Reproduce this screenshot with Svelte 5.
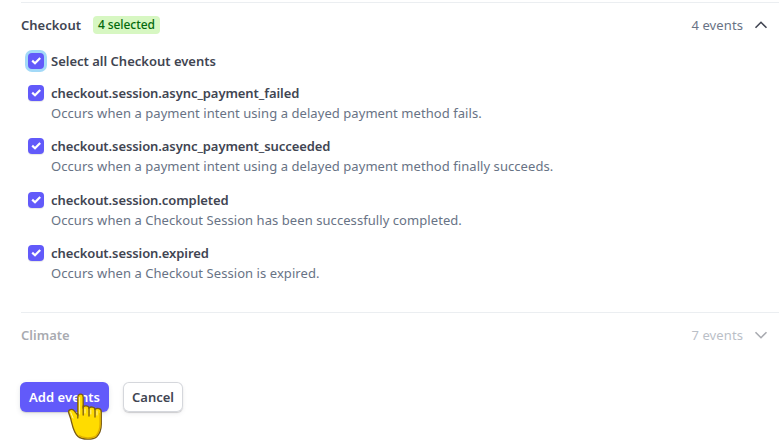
<script>
    let groups = [
        {
            name: 'Checkout',
            count: 4,
            open: true,
            events: [
                { name: 'checkout.session.async_payment_failed', text: 'Occurs when a payment intent using a delayed payment method fails.', checked: true },
                { name: 'checkout.session.async_payment_succeeded', text: 'Occurs when a payment intent using a delayed payment method finally succeeds.', checked: true },
                { name: 'checkout.session.completed', text: 'Occurs when a Checkout Session has been successfully completed.', checked: true },
                { name: 'checkout.session.expired', text: 'Occurs when a Checkout Session is expired.', checked: true }
            ]
        },
        { name: 'Climate', count: 7, open: false, events: [] }
    ]

    /**
	 * @param {any} group
	 */
    function selected(group) {
        return group.events.filter((/** @type {any} */ e) => e.checked).length
    }

    /**
	 * @param {any} group
	 */
    function toggleAll(group) {
        const value = selected(group) !== group.events.length
        group.events.forEach((/** @type {any} */ e) => e.checked = value)
        groups = groups
    }
</script>

<div class="page">
    <div class="list">
        {#each groups as group}
            <section class:faded={!group.open}>
                <button class="group_head" on:click={() => group.open = !group.open}>
                    <span class="group_name">{group.name}</span>
                    {#if selected(group) > 0}
                        <span class="badge">{selected(group)} selected</span>
                    {/if}
                    <span class="count">{group.count} events</span>
                    <svg class="chevron" width="14" height="8" viewBox="0 0 14 8">
                        <path d={group.open ? 'M1.5 6.8 L7 1.3 L12.5 6.8' : 'M1.5 1.2 L7 6.7 L12.5 1.2'} />
                    </svg>
                </button>

                {#if group.open && group.events.length}
                    <div class="events">
                        <div class="row all">
                            <button class="check focus" class:on={selected(group) === group.events.length} aria-label="Select all" on:click={() => toggleAll(group)}>
                                <svg width="16" height="16" viewBox="0 0 16 16"><path d="M4.2 7.6 L7 10.2 L12.2 4.9" /></svg>
                            </button>
                            <span class="title select">Select all {group.name} events</span>
                        </div>
                        {#each group.events as event}
                            <div class="row">
                                <button class="check" class:on={event.checked} aria-label={event.name} on:click={() => event.checked = !event.checked}>
                                    <svg width="16" height="16" viewBox="0 0 16 16"><path d="M4.2 7.6 L7 10.2 L12.2 4.9" /></svg>
                                </button>
                                <div class="info">
                                    <div class="title">{event.name}</div>
                                    <div class="text">{event.text}</div>
                                </div>
                            </div>
                        {/each}
                    </div>
                {/if}
            </section>
        {/each}
    </div>

    <div class="actions">
        <button class="btn primary">Add events</button>
        <button class="btn">Cancel</button>
    </div>

    <!-- hand pointer over the button -->
    <svg class="hand" width="38" height="50" viewBox="0 0 38 50">
        <path class="skin" d="M10.8 22 V4.2 C10.8 0.2 16.2 0.2 16.2 4.2 V14 C17.5 12.2 21.5 12.6 22 15 C23.5 13.4 27.5 13.8 28 16.2 C30.5 14.6 34.5 15.6 34.3 19 V31 C34.3 36 32.5 41 29.5 44 C26 47 15 47 11 43.5 C6.5 39.5 5.8 34 3.8 26 L1.6 19.5 C1 16.4 5 15.4 7 17.6 C8.8 19.5 9.8 21 10.8 22 Z" />
        <path class="shade" d="M33 20 V31 C33 36 31.5 40 28.8 43 C25 45.5 16 45.5 12 42.5" />
        <path class="line" d="M10.8 21 V25 M16.2 13 V22 M22 15 V23 M28 16 V24" />
        <path class="shine" d="M12.6 4.5 V21 M18 16 V20 M23.8 17 V21 M30 18 V22 M3.6 19 L6 25" />
    </svg>
</div>

<style>
    :global(body) {
        margin: 0;
        background: #fff;
    }

    .page {
        position: relative;
        width: 779px;
        height: 442px;
        overflow: hidden;
        box-sizing: border-box;
        padding: 2px 0 0 20px;
        font-family: "Noto Sans", "Open Sans", sans-serif;
        font-size: 13px;
        line-height: 20px;
        color: #414552;
    }

    button {
        font: inherit;
        color: inherit;
        border: 0;
        padding: 0;
        margin: 0;
        background: none;
        cursor: pointer;
    }

    .list {
        height: 380px;
    }

    section {
        margin-left: 1px;
        height: 309px;
        border-top: 1px solid #ebeef1;
    }

    .group_head {
        display: flex;
        align-items: center;
        width: 100%;
        height: 44px;
        padding-right: 11px;
        text-align: left;
    }

    .group_name {
        font-weight: 600;
    }

    .badge {
        margin-left: 12px;
        padding: 0 5px;
        height: 18px;
        line-height: 18px;
        font-size: 12px;
        letter-spacing: -0.08px;
        font-weight: 500;
        color: #05690d;
        background: #d7f7c2;
        border-radius: 4px;
    }

    .count {
        margin-left: auto;
        letter-spacing: 0.1px;
        color: #687385;
    }

    .chevron {
        margin-left: 11px;
        fill: none;
        stroke: #414552;
        stroke-width: 1.6;
    }

    .faded .group_head {
        opacity: 0.45;
    }

    .events {
        padding: 4px 0 0 7px;
    }

    .row {
        display: flex;
        gap: 7px;
        height: 40px;
        margin-bottom: 13.33px;
    }

    .row.all {
        height: 20px;
        margin-bottom: 12px;
    }

    .check {
        width: 16px;
        height: 16px;
        margin-top: 2px;
        flex: none;
        border-radius: 4px;
        box-shadow: 0 0 0 1px #d5dbe1 inset;
    }

    .check.on {
        background: #625afa;
        box-shadow: 0 1px 1px rgba(0,0,0,0.1);
    }

    .check.focus {
        box-shadow: 0 0 0 3px #a3d9f7;
    }

    .check svg {
        display: none;
        fill: none;
        stroke: #fff;
        stroke-width: 2.2;
    }

    .check.on svg {
        display: block;
    }

    .title {
        font-weight: 600;
        letter-spacing: -0.08px;
        white-space: nowrap;
    }

    .title.select {
        letter-spacing: 0;
    }

    .text {
        color: #687385;
        letter-spacing: 0.065px;
        white-space: nowrap;
    }

    .actions {
        display: flex;
        gap: 14px;
    }

    .btn {
        height: 30px;
        width: 60px;
        font-weight: 600;
        text-align: center;
        white-space: nowrap;
        background: #fff;
        border-radius: 6px;
        box-shadow: 0 0 0 1px #d5d7dc inset, 0 1px 1px rgba(0,0,0,0.16), 0 2px 4px rgba(60,66,87,0.08);
    }

    .btn.primary {
        width: 89px;
        letter-spacing: 0.08px;
        color: #fff;
        background: #625afa;
        box-shadow: 0 1px 1px rgba(0,0,0,0.12), 0 2px 5px rgba(60,66,87,0.12);
    }

    .hand {
        position: absolute;
        left: 67px;
        top: 393px;
        pointer-events: none;
    }

    .skin {
        fill: #ffdc00;
        stroke: #795b16;
        stroke-width: 1.3;
    }

    .shade {
        fill: none;
        stroke: #e0ae00;
        stroke-width: 1.2;
    }

    .line {
        fill: none;
        stroke: #795b16;
        stroke-width: 1.3;
        stroke-linecap: round;
    }

    .shine {
        fill: none;
        stroke: #fff3a0;
        stroke-width: 1;
        stroke-linecap: round;
    }
</style>
